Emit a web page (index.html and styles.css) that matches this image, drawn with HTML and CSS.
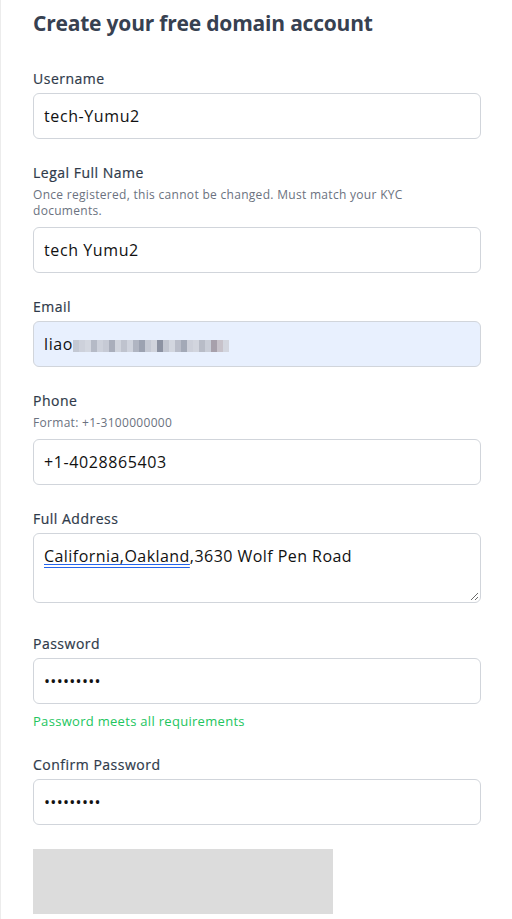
FILE: index.html
```html
<!DOCTYPE html>
<html lang="en">
<head>
<meta charset="utf-8">
<title>Create your free domain account</title>
<link rel="stylesheet" href="styles.css">
</head>
<body>
<div class="page">
  <h1 class="title">Create your free domain account</h1>
  <form class="form">
    <div class="field">
      <label class="label" for="username">Username</label>
      <input class="input" id="username" type="text" value="tech-Yumu2">
    </div>
    <div class="field">
      <label class="label" for="legal">Legal Full Name</label>
      <p class="hint">Once registered, this cannot be changed. Must match your KYC documents.</p>
      <input class="input" id="legal" type="text" value="tech Yumu2">
    </div>
    <div class="field">
      <label class="label" for="email">Email</label>
      <div class="input input-autofill" id="email">
        <span>liao</span>
        <span class="blur">
          <i style="background:#c3c8d3"></i><i style="background:#cdd1db"></i><i style="background:#d3d7e0"></i><i style="background:#b5bac6"></i><i style="background:#cdd1db"></i><i style="background:#c6cad5"></i><i style="background:#a9aebb"></i><i style="background:#d0d4dd"></i><i style="background:#bfc3ce"></i><i style="background:#cfd3dd"></i><i style="background:#b0b5c2"></i><i style="background:#9ca2b1"></i><i style="background:#c5c9d4"></i><i style="background:#d0d3dc"></i><i style="background:#8c92a2"></i><i style="background:#c2c6d1"></i><i style="background:#d2d6df"></i><i style="background:#b9bdc9"></i><i style="background:#a3a9b7"></i><i style="background:#cdd0da"></i><i style="background:#d2d5de"></i><i style="background:#b8bcc7"></i><i style="background:#c9cdd7"></i><i style="background:#a7a0ab"></i><i style="background:#c7c2ca"></i><i style="background:#d3d6df"></i>
        </span>
      </div>
    </div>
    <div class="field">
      <label class="label" for="phone">Phone</label>
      <p class="hint">Format: +1-3100000000</p>
      <input class="input" id="phone" type="tel" value="+1-4028865403">
    </div>
    <div class="field">
      <label class="label" for="address">Full Address</label>
      <div class="input textarea" id="address"><span class="spell">California,Oakland</span>,3630 Wolf Pen Road<svg class="grip" width="9" height="9" viewBox="0 0 9 9"><path d="M8 1 L1 8 M8 5 L5 8" stroke="#6b6b6b" stroke-width="1" fill="none"/></svg></div>
    </div>
    <div class="field">
      <label class="label" for="password">Password</label>
      <input class="input password" id="password" type="password" value="abcdefghi">
      <p class="ok">Password meets all requirements</p>
    </div>
    <div class="field">
      <label class="label" for="confirm">Confirm Password</label>
      <input class="input password" id="confirm" type="password" value="abcdefghi">
    </div>
    <div class="captcha"></div>
  </form>
</div>
</body>
</html>
```
FILE: styles.css
```css
* { box-sizing: border-box; }
html, body { margin: 0; padding: 0; background: #fff; }
body {
  font-family: "Open Sans", "Liberation Sans", sans-serif;
  color: #374151;
}
.page {
  border-left: 1px solid #ececec;
  padding: 9px 31px 0 32px;
  min-height: 919px;
}
.title {
  margin: 0 0 32px;
  font-size: 21px;
  line-height: 28px;
  font-weight: 700;
  letter-spacing: -0.2px;
  color: #374151;
}
.form { display: flex; flex-direction: column; }
.field { display: flex; flex-direction: column; margin-bottom: 24px; }
.label {
  font-size: 14px;
  line-height: 20px;
  font-weight: 400;
  letter-spacing: 0.5px;
  -webkit-text-stroke: 0.2px currentColor;
  color: #2f3a4a;
  margin-bottom: 4px;
}
.hint {
  max-width: 410px;
  margin: 0 0 8px;
  font-size: 12px;
  line-height: 16px;
  letter-spacing: 0.3px;
  color: #6b7280;
}
.input {
  display: block;
  width: 100%;
  height: 46px;
  padding: 12px 10px;
  border: 1px solid #d1d5db;
  border-radius: 6px;
  background: #fff;
  font-family: inherit;
  font-size: 16px;
  line-height: 20px;
  letter-spacing: 0.6px;
  color: #111111;
  outline: none;
}
.input-autofill {
  background: #e8f0fe;
  display: flex;
  align-items: center;
}
.blur { display: flex; height: 12px; margin-top: 3px; }
.blur i { display: block; width: 6px; height: 100%; }
.textarea {
  position: relative;
  height: 70px;
  margin-bottom: 7px;
  letter-spacing: 0.45px;
}
.spell {
  text-decoration: underline double #2563eb;
  text-underline-offset: 2px;
}
.grip { position: absolute; right: 1px; bottom: 1px; }
.password { letter-spacing: 0.3px; }
.ok {
  margin: 7px 0 0;
  font-size: 13px;
  line-height: 20px;
  letter-spacing: 0.3px;
  color: #22c55e;
}
.captcha {
  width: 300px;
  height: 65px;
  background: #dcdcdc;
}
```
